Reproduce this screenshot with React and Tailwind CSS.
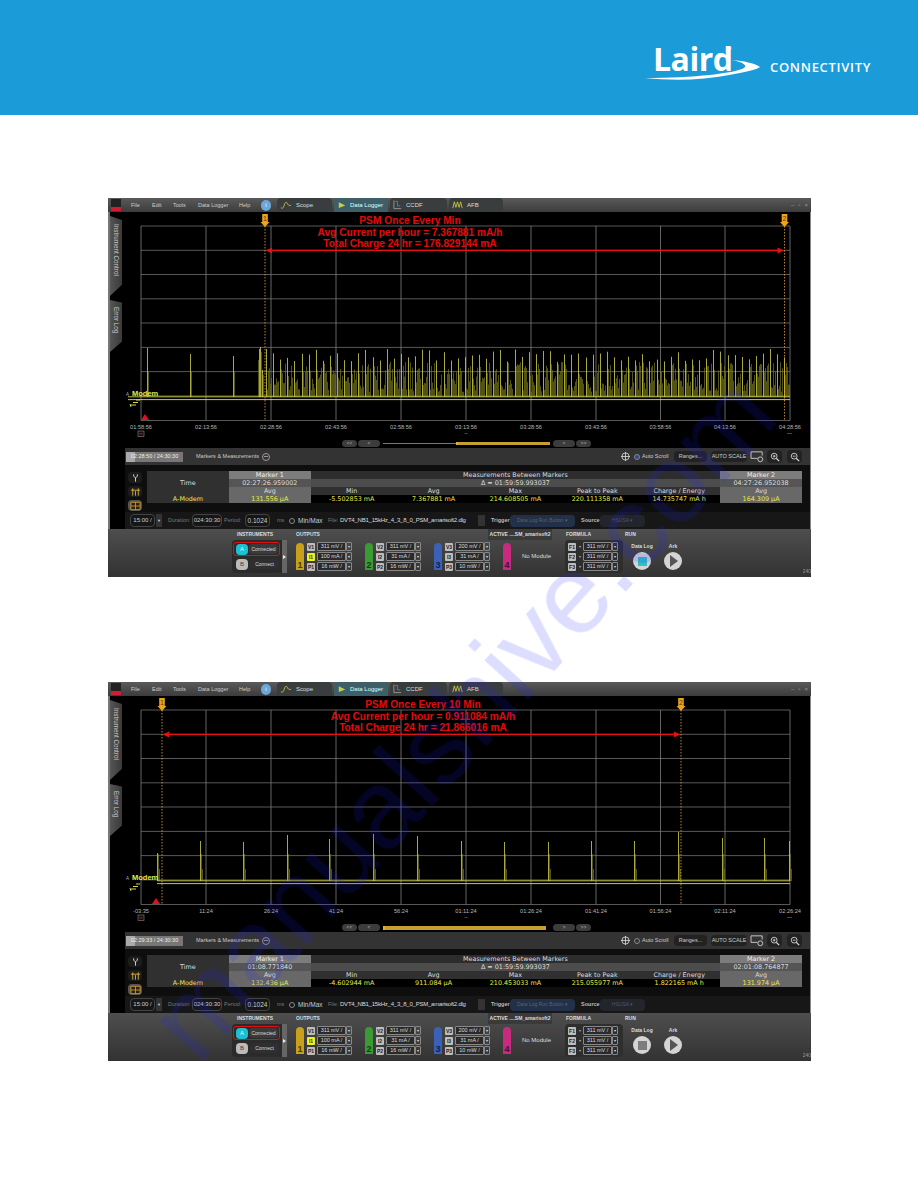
import React from 'react';

const GRID_X = [141, 206, 271, 336, 401, 466, 531, 596, 660.5, 725, 790];
const GRID_Y = [226, 250.3, 274.5, 298.8, 323, 347.4, 371.6, 395.9, 420.5];

const captures = [
  {
    title: 'PSM Once Every Min',
    avg: 'Avg Current per hour = 7.367881 mA/h',
    total: 'Total Charge 24 hr = 176.829144 mA',
    textX: 410,
    marker1: 265,
    marker2: 784.5,
    triangle: 145,
    dense: true,
    labels: ['01:58:56', '02:13:56', '02:28:56', '02:43:56', '02:58:56', '03:13:56', '03:28:56', '03:43:56', '03:58:56', '04:13:56', '04:28:56'],
    progress: '02:28:50 / 24:30:30',
    goldFrom: 73,
    goldH: 'h-[3px]',
    goldPad: '',
    autoScroll: 'bg-[#2b4a8a]',
    m1Time: '02:27:26.959002',
    m1Avg: '131.556 µA',
    delta: 'Δ = 01:59:59.993037',
    min: '-5.502853 mA',
    avgVal: '7.367881 mA',
    max: '214.608505 mA',
    p2p: '220.111358 mA',
    charge: '14.735747 mA h',
    m2Time: '04:27:26.952038',
    m2Avg: '164.309 µA',
    stop: 'bg-[#2fc0c8]',
  },
  {
    title: 'PSM Once Every 10 Min',
    avg: 'Avg Current per hour = 0.911084 mA/h',
    total: 'Total Charge 24 hr = 21.866016 mA',
    textX: 423,
    marker1: 162,
    marker2: 681,
    triangle: 156,
    dense: false,
    labels: ['-03:35', '11:24', '26:24', '41:24', '56:24', '01:11:24', '01:26:24', '01:41:24', '01:56:24', '02:11:24', '02:26:24'],
    progress: '02:29:33 / 24:30:30',
    goldFrom: 0,
    goldH: 'h-[4px]',
    goldPad: 'pr-[4px]',
    autoScroll: 'bg-transparent',
    m1Time: '01:08.771840',
    m1Avg: '132.436 µA',
    delta: 'Δ = 01:59:59.993037',
    min: '-4.602944 mA',
    avgVal: '911.084 µA',
    max: '210.453033 mA',
    p2p: '215.055977 mA',
    charge: '1.822165 mA h',
    m2Time: '02:01:08.764877',
    m2Avg: '131.974 µA',
    stop: 'bg-[#7d7d7d]',
  },
];

// sparse spikes of the 10 min capture, [x, top]
const SPARSE = [[157, 369], [200, 357], [243, 358], [287, 351], [329, 355], [373, 350], [417, 352], [461, 357], [504, 358], [548, 358], [591, 357], [634, 357], [678, 348], [722, 354], [764, 354], [789, 357]];

function denseSpikes() {
  let seed = 7;
  const rnd = () => {
    seed = (seed * 16807) % 2147483647;
    return seed / 2147483647;
  };
  const bright = [];
  const dim = [];
  [[147, 348], [190, 354], [233, 356]].forEach(([x, t]) => {
    bright.push(`M${x}.5 397V${t}`);
    dim.push(`M${x + 1}.5 397V372`);
  });
  bright.push('M259.5 397V349M260.5 397V347M262.5 397V370');
  dim.push('M258.5 397V360M261.500 397V352M263.5 397V375');
  for (let x = 266; x < 790; x += 7.1) {
    const top = 349 + rnd() * 13;
    const px = Math.round(x) + 0.5;
    bright.push(`M${px} 397V${top.toFixed(1)}`);
    // tail of each burst, uneven heights so it reads as stripes
    for (let i = 1; i <= 5; i++) {
      dim.push(`M${px + i} 397V${(362 + rnd() * 30).toFixed(1)}`);
    }
  }
  return { bright: bright.join(''), dim: dim.join('') };
}

function sparseSpikes() {
  const bright = SPARSE.map(([x, t]) => `M${x}.5 397V${t}`).join('');
  const dim = SPARSE.map(([x]) => `M${x + 1}.5 397V370M${x + 2}.5 397V385`).join('');
  return { bright, dim };
}

function MarkerFlag({ x, n }) {
  return (
    <g>
      <line x1={x} x2={x} y1="226" y2="420" stroke="#e8a23a" strokeWidth="0.8" strokeDasharray="1.5 1.5" />
      <path d={`M${x - 2.8} 214H${x + 2.8}V222H${x + 4.5}L${x} 227L${x - 4.5} 222H${x - 2.8}Z`} fill="#eda41c" />
      <text x={x} y="221" textAnchor="middle" fontSize="7" fill="#5a3a00" fontFamily="Liberation Sans, sans-serif">{n}</text>
    </g>
  );
}

function Chart({ data }) {
  const spikes = data.dense ? denseSpikes() : sparseSpikes();
  return (
    <svg viewBox="125 212 685 226" className="block w-[685px] h-[226px] bg-black">
      {GRID_Y.map((y) => (
        <line key={y} x1="141" x2="790" y1={y} y2={y} stroke="#6f6f6f" strokeWidth="0.8" />
      ))}
      {GRID_X.map((x) => (
        <line key={x} x1={x} x2={x} y1="226" y2="420.5" stroke="#7d7d7d" strokeWidth="0.8" />
      ))}
      <path d={spikes.dim} stroke="#77771c" strokeWidth="0.7" fill="none" />
      <path d={spikes.bright} stroke="#d4d44c" strokeWidth="0.8" fill="none" />
      <line x1={data.dense ? 128 : 157} x2="790" y1="396.8" y2="396.8" stroke="#cfcf45" strokeWidth="0.9" />
      <line x1={data.dense ? 128 : 157} x2="790" y1="399.6" y2="399.6" stroke="#dcdc50" strokeWidth="0.9" />

      <text x="126" y="396" fontSize="4.5" fill="#b0b0b0" fontFamily="Liberation Sans, sans-serif">A</text>
      <text x="132" y="396" fontSize="7.5" fontWeight="700" fill="#e4e84c" fontFamily="Liberation Sans, sans-serif">Modem</text>
      <path d="M136 400H140M133 402.5H138M131 405H136M130 404L131 407" stroke="#d6d640" strokeWidth="1" fill="none" />
      <path d={`M${data.triangle - 4} 420L${data.triangle} 414L${data.triangle + 4} 420Z`} fill="#e0101c" />

      <MarkerFlag x={data.marker1} n="1" />
      <MarkerFlag x={data.marker2} n="2" />

      <line x1={data.marker1 + 2} x2={data.marker2 - 2} y1="250.4" y2="250.4" stroke="#e81010" strokeWidth="1.3" />
      <path d={`M${data.marker1 + 1} 250.4l6 -3v6Z`} fill="#e81010" />
      <path d={`M${data.marker2 - 1} 250.4l-6 -3v6Z`} fill="#e81010" />
      <g fill="#e00c0c" fontSize="10.2" fontWeight="700" textAnchor="middle" fontFamily="Liberation Sans, sans-serif">
        <text x={data.textX} y="224">{data.title}</text>
        <text x={data.textX} y="235.5">{data.avg}</text>
        <text x={data.textX} y="247">{data.total}</text>
      </g>

      {data.labels.map((label, i) => (
        <text key={label} x={GRID_X[i]} y="428.5" textAnchor="middle" fontSize="5.6" fill="#b8b8b8" fontFamily="Liberation Sans, sans-serif">
          {label}
        </text>
      ))}
      <rect x="138" y="431" width="6" height="5.5" fill="#111" stroke="#888" strokeWidth="0.6" />
      <rect x="139.5" y="433.3" width="3" height="1" fill="#d01010" />
      <rect x="464.5" y="433" width="3" height="1" fill="#c01010" />
      <rect x="787" y="433" width="5" height="1" fill="#c01010" />
    </svg>
  );
}

function ScrollRow({ data }) {
  const btn = 'h-[7px] rounded-sm bg-[#3c3c3c] text-[#bbb] text-[5px] leading-[7px] text-center';
  return (
    <div className="h-[10px] bg-black flex items-start pl-[217px] pt-[2px] gap-[1px]">
      <div className={`${btn} w-[15px]`}>{'<<'}</div>
      <div className={`${btn} w-[22px]`}>{'<'}</div>
      <div className={`w-[167px] mx-[2px] h-[7px] flex items-center ${data.goldPad}`}>
        {data.goldFrom > 0 && <div className="h-px bg-[#777] w-[73px]" />}
        <div className={`${data.goldH} flex-1 bg-[#c4a02e] border-l-2 border-[#e0b030]`} />
      </div>
      <div className={`${btn} w-[22px]`}>{'>'}</div>
      <div className={`${btn} w-[15px]`}>{'>>'}</div>
    </div>
  );
}

function Crosshair() {
  return (
    <svg viewBox="0 0 10 10" className="w-[9px] h-[9px]" fill="none" stroke="#ddd" strokeWidth="0.9">
      <circle cx="5" cy="5" r="4" />
      <path d="M5 0V10M0 5H10" />
    </svg>
  );
}

function Magnifier({ sign }) {
  return (
    <div className="w-[15px] h-[13px] bg-[#222] rounded-sm flex items-center justify-center">
      <svg viewBox="0 0 12 12" className="w-[10px] h-[10px]" fill="none" stroke="#ddd" strokeWidth="1">
        <circle cx="5" cy="5" r="3.5" />
        <path d="M7.6 7.6L11 11" strokeWidth="1.5" />
        <path d={sign === '+' ? 'M3.4 5H6.6M5 3.4V6.6' : 'M3.4 5H6.6'} />
      </svg>
    </div>
  );
}

function MarkersRow({ data }) {
  return (
    <div className="h-[17px] bg-[#333] flex items-center pl-px text-[5.5px] text-[#ccc]">
      <div className="w-[57px] h-[10px] bg-[#777] relative flex items-center justify-center text-[#eee]">
        <div className="absolute left-0 top-0 bottom-0 w-[9px] bg-[#aaa]" />
        <span className="relative">{data.progress}</span>
      </div>
      <span className="ml-[13px]">Markers &amp; Measurements</span>
      <div className="ml-[3px] w-[8px] h-[8px] rounded-full border border-[#999] flex items-center justify-center">
        <div className="w-[4px] h-px bg-[#999]" />
      </div>
      <div className="ml-auto flex items-center">
        <Crosshair />
        <div className={`ml-[4px] w-[6px] h-[6px] rounded-full border border-[#888] ${data.autoScroll}`} />
        <span className="ml-[2px] w-[29px] whitespace-nowrap">Auto Scroll</span>
        <div className="ml-[3px] w-[33px] h-[11px] bg-[#222] rounded-sm flex items-center justify-center">Ranges...</div>
        <div className="ml-[4px] w-[36px] h-[11px] bg-[#222] rounded-sm flex items-center justify-center whitespace-nowrap">AUTO SCALE</div>
        <svg viewBox="0 0 16 14" className="ml-[3px] w-[15px] h-[13px]" fill="none" stroke="#ddd" strokeWidth="0.9">
          <path d="M8 9H1V2H13V6" />
          <circle cx="11" cy="10" r="2.6" />
        </svg>
        <div className="ml-[2px]"><Magnifier sign="+" /></div>
        <div className="ml-[5px] mr-[8px]"><Magnifier sign="-" /></div>
      </div>
    </div>
  );
}

function ToolButton({ kind }) {
  return (
    <div className={`w-[14px] h-[11px] rounded-sm flex items-center justify-center ${kind === 'grid' ? 'bg-[#555]' : 'bg-[#1c1c1c]'}`}>
      <svg viewBox="0 0 12 10" className="w-[11px] h-[10px]" fill="none" strokeWidth="1">
        {kind === 'probe' && <path d="M4 1V3L6 5L8 3V1M6 5V9" stroke="#ddd" />}
        {kind === 'span' && <path d="M1 3H11M3 1V9M9 1V9M6 4V9" stroke="#e0b040" />}
        {kind === 'grid' && <path d="M1 1H11V9H1ZM6 1V9M1 5H11" stroke="#c9962a" fill="#2a2208" />}
      </svg>
    </div>
  );
}

function Cell({ children, className = '' }) {
  return <div className={`h-[8px] leading-[8px] text-center whitespace-nowrap ${className}`}>{children}</div>;
}

function MeasureTable({ data }) {
  const yellow = 'text-[#e8e848]';
  const values = [data.min, data.avgVal, data.max, data.p2p, data.charge];
  const heads = ['Min', 'Avg', 'Max', 'Peak to Peak', 'Charge / Energy'];
  return (
    <div className="h-[47px] bg-[#0e0e0e] flex pt-[6px] pl-[3px] font-['DejaVu_Sans',sans-serif]">
      <div className="w-[19px] mt-[1px] flex flex-col gap-[3px]">
        <ToolButton kind="probe" />
        <ToolButton kind="span" />
        <ToolButton kind="grid" />
      </div>
      <div className="w-[655px] grid grid-cols-8 text-[6.4px] text-[#ddd] self-start">
        <Cell className="bg-[#303030]" />
        <Cell className="bg-[#7c7c7c] text-[#f0f0f0]">Marker 1</Cell>
        <Cell className="col-span-5 bg-[#2d2d2d]">Measurements Between Markers</Cell>
        <Cell className="bg-[#7c7c7c] text-[#f0f0f0]">Marker 2</Cell>

        <Cell className="bg-[#303030]">Time</Cell>
        <Cell className="bg-[#555]">{data.m1Time}</Cell>
        <Cell className="col-span-5 bg-[#4c4c4c]">{data.delta}</Cell>
        <Cell className="bg-[#555]">{data.m2Time}</Cell>

        <Cell className="bg-[#303030]" />
        <Cell className="bg-[#686868]">Avg</Cell>
        {heads.map((h) => (
          <Cell key={h} className="bg-[#303030]">{h}</Cell>
        ))}
        <Cell className="bg-[#686868]">Avg</Cell>

        <Cell className={`bg-[#303030] ${yellow}`}>A-Modem</Cell>
        <Cell className={`bg-[#686868] ${yellow}`}>{data.m1Avg}</Cell>
        {values.map((v) => (
          <Cell key={v} className={`bg-black ${yellow}`}>{v}</Cell>
        ))}
        <Cell className={`bg-[#686868] ${yellow}`}>{data.m2Avg}</Cell>
      </div>
    </div>
  );
}

function FileRow() {
  const field = 'h-[13px] border border-[#444] bg-[#161616] rounded-sm flex items-center justify-center text-[#ccc] whitespace-nowrap';
  return (
    <div className="h-[17px] bg-[#171717] flex items-center pl-[5px] text-[5.5px] text-[#777]">
      <div className={`${field} w-[25px] text-[6px]`}>15:00 /</div>
      <div className="ml-[1px] w-[6px] h-[13px] bg-[#333] flex items-center justify-center text-[4px] text-[#ccc]">▼</div>
      <span className="ml-[6px] w-[24px]">Duration:</span>
      <div className={`${field} w-[30px] text-[6px]`}>024:30:30</div>
      <span className="ml-[2px] w-[16px]">Period:</span>
      <div className={`${field} ml-[5px] w-[25px] text-[6.5px]`}>0.1024</div>
      <span className="ml-[7px] w-[6px]">ms</span>
      <div className="ml-[6px] w-[6px] h-[6px] border border-[#888] rounded-sm" />
      <span className="ml-[3px] w-[25px] text-[#ccc] text-[6.5px] whitespace-nowrap">Min/Max</span>
      <span className="ml-[5px] w-[10px]">File:</span>
      <span className="ml-[2px] w-[135px] text-[#ddd] text-[6px] tracking-[-0.22px] whitespace-nowrap">DVT4_NB1_15kHz_4_3_8_0_PSM_amarisoft2.dlg</span>
      <div className="ml-[3px] w-[7px] h-[11px] bg-[#333]" />
      <span className="ml-[6px] w-[17px] text-[#bbb] font-bold">Trigger</span>
      <div className="ml-[2px] w-[65px] h-[12px] bg-[#23304a] rounded-sm flex items-center justify-center text-[#566] text-[5px] whitespace-nowrap">Data Log Run Button ▾</div>
      <span className="ml-[6px] w-[17px] text-[#bbb] font-bold">Source</span>
      <div className="ml-[2px] w-[45px] h-[12px] bg-[#22252b] rounded-sm flex items-center justify-center text-[#556] text-[5px]">HSUSA ▾</div>
    </div>
  );
}

function Setting({ badge, value, badgeClass = 'bg-[#bdbdbd] text-[#222]', wide }) {
  return (
    <div className="flex items-center h-[9px]">
      <div className={`w-[8px] h-[8px] rounded-[1px] text-[5px] leading-[8px] text-center font-bold ${badgeClass}`}>{badge}</div>
      {wide ? (
        <div className="w-[7px] text-[4px] leading-[9px] text-center text-[#aaa]">▾</div>
      ) : (
        <div className="w-[2px]" />
      )}
      <div className="w-[29px] h-[9px] border border-[#888] rounded-[1px] text-[5.5px] leading-[7px] text-center text-[#ddd] bg-[#2a2a2a] whitespace-nowrap">{value}</div>
      <div className="w-[6px] h-[9px] border border-[#888] rounded-[1px] text-[4px] leading-[7px] text-center text-[#ddd]">▾</div>
    </div>
  );
}

function Channel({ n, bar, rows, numColor }) {
  return (
    <div className="flex gap-[3px] items-center">
      <div className={`w-[8px] h-[27px] rounded-t-sm flex items-end justify-center text-[9px] leading-[10px] font-bold ${bar} ${numColor}`}>{n}</div>
      <div className="flex flex-col gap-px">
        {rows.map(([badge, value, cls]) => (
          <Setting key={badge} badge={badge} value={value} badgeClass={cls} />
        ))}
      </div>
    </div>
  );
}

function RunButton({ label, play, stop }) {
  return (
    <div className="flex flex-col items-center w-[20px]">
      <div className="text-[5px] leading-[6px] font-bold text-[#ddd] mb-[3px] whitespace-nowrap">{label}</div>
      <div className="w-[18px] h-[18px] rounded-full bg-[#d4d4d4] flex items-center justify-center">
        {play ? (
          <div className="w-0 h-0 ml-[2px] border-y-[6px] border-y-transparent border-l-[8px] border-l-[#555]" />
        ) : (
          <div className={`w-[9px] h-[9px] ${stop}`} />
        )}
      </div>
    </div>
  );
}

function InstrumentPanel({ data }) {
  const heading = 'text-[5px] font-bold text-[#ddd] h-[11px] leading-[11px] whitespace-nowrap';
  return (
    <div className="h-[48px] bg-gradient-to-b from-[#4e4e4e] to-[#333] flex pl-[124px] relative">
      <div className="w-[58px]">
        <div className={`${heading} pl-[5px]`}>INSTRUMENTS</div>
        <div className="h-[33px] bg-[#2b2b2b] flex flex-col relative px-[1px] pt-[2px] gap-[1px] rounded-sm w-[55px]">
          <div className="w-[47px] h-[14px] border border-[#e01010] rounded-[3px] flex items-center gap-[1px] pl-[2px] pr-px">
            <div className="w-[12px] h-[11px] bg-[#1cc0d2] rounded-sm text-[#d8f8ff] text-[6px] leading-[11px] text-center">A</div>
            <div className="flex-1 h-[10px] bg-[#3a3a3a] rounded-sm text-[5px] leading-[10px] text-center text-[#ddd]">Connected</div>
          </div>
          <div className="w-[47px] h-[14px] flex items-center gap-[2px] pl-[3px] pr-px">
            <div className="w-[12px] h-[11px] bg-[#bbb] rounded-sm text-[#444] text-[6px] leading-[11px] text-center">B</div>
            <div className="flex-1 h-[10px] bg-[#2f2f2f] rounded-sm text-[5px] leading-[10px] text-center text-[#ddd]">Connect</div>
          </div>
          <div className="absolute right-0 top-0 bottom-0 w-[5px] bg-[#666] flex items-center justify-center">
            <div className="w-0 h-0 border-y-[2px] border-y-transparent border-l-[3px] border-l-[#eee]" />
          </div>
        </div>
      </div>
      <div className="ml-[6px] w-[189px]">
        <div className={heading}>OUTPUTS</div>
        <div className="flex pt-[2px] gap-[13px]">
          <Channel n="1" bar="bg-[#c9a01c]" numColor="text-[#4a3a00]" rows={[['V1', '311 mV /'], ['I1', '100 mA /', 'bg-[#f0f020] text-[#333]'], ['P1', '16 mW /']]} />
          <Channel n="2" bar="bg-[#3a9a34]" numColor="text-[#0f3f10]" rows={[['V2', '311 mV /'], ['I2', '31 mA /'], ['P2', '16 mW /']]} />
          <Channel n="3" bar="bg-[#3a60b8]" numColor="text-[#0f1f55]" rows={[['V3', '200 mV /'], ['I3', '31 mA /'], ['P3', '10 mW /']]} />
        </div>
      </div>
      <div className="w-[64px] ml-[3px]">
        <div className={`${heading} text-center text-[4.6px] bg-[#3a3a3a]`}>ACTIVE ....SM_amarisoft2</div>
        <div className="flex items-center pt-[3px] pl-[15px]">
          <div className="w-[8px] h-[27px] rounded-t-sm bg-[#c82a80] flex items-end justify-center text-[9px] leading-[10px] font-bold text-[#451030]">4</div>
          <span className="ml-[11px] text-[6px] text-[#ddd] whitespace-nowrap">No Module</span>
        </div>
      </div>
      <div className="ml-[13px] w-[58px]">
        <div className={`${heading} pl-px`}>FORMULA</div>
        <div className="bg-[#2e2e2e] flex flex-col gap-px pl-[3px] pt-[2px] pb-[2px] rounded-sm">
          <Setting badge="F1" value="311 mV /" wide />
          <Setting badge="F2" value="311 mV /" wide />
          <Setting badge="F3" value="311 mV /" wide />
        </div>
      </div>
      <div className="ml-[2px]">
        <div className={heading}>RUN</div>
        <div className="flex gap-[11px] pl-[7px] pt-[3px]">
          <RunButton label="Data Log" stop={data.stop} />
          <RunButton label="Ark" play />
        </div>
      </div>
      <div className="absolute right-0 bottom-[2px] text-[5px] text-[#999]">240</div>
    </div>
  );
}

function AppIcon() {
  return (
    <div className="w-[10px] h-[12px] ml-[3px] flex flex-col">
      <div className="h-[8px] bg-[#222]" />
      <div className="h-[4px] bg-[#d21c32]" />
    </div>
  );
}

function Tab({ children, label, active }) {
  return (
    <div className={`h-[14px] flex items-center gap-[4px] pl-[3px] text-[6px] rounded-t-sm ${active ? 'bg-[#3f5f68] text-[#dff]' : 'bg-[#3a3d3d] text-[#ddd]'} `}>
      {children}
      <span>{label}</span>
    </div>
  );
}

function TitleBar() {
  const menu = [['File', 'w-[21px]'], ['Edit', 'w-[21px]'], ['Tools', 'w-[25px]'], ['Data Logger', 'w-[41px]'], ['Help', 'w-[22px]']];
  return (
    <div className="h-[14px] bg-gradient-to-b from-[#5a5a5a] to-[#3c3c3c] flex items-center text-[5.5px] text-[#ccc]">
      <AppIcon />
      <div className="flex ml-[10px]">
        {menu.map(([m, w]) => (
          <span key={m} className={w}>{m}</span>
        ))}
      </div>
      <div className="w-[10px] h-[11px] rounded-full bg-[#6aa8dc] text-white text-[6px] leading-[11px] text-center">i</div>
      <div className="ml-[6px] w-[55px]">
        <Tab label="Scope">
          <svg viewBox="0 0 14 10" className="w-[12px] h-[10px]" fill="none" stroke="#d8d840" strokeWidth="0.9">
            <path d="M1 8C3 10 4 8 5 5C6 1 8 1 9 4C10 6 12 6 13 5" />
          </svg>
        </Tab>
      </div>
      <div className="ml-[2px] w-[54px]">
        <Tab label="Data Logger" active>
          <svg viewBox="0 0 10 10" className="ml-[1px] w-[8px] h-[9px]">
            <path d="M1 1L9 5L1 8Z" fill="#c8d040" />
          </svg>
        </Tab>
      </div>
      <div className="ml-[2px] w-[57px]">
        <Tab label="CCDF">
          <svg viewBox="0 0 10 10" className="w-[9px] h-[10px]" fill="none">
            <path d="M1 0V9H9" stroke="#999" />
            <path d="M2 1H5V6H8" stroke="#3a8ac0" />
          </svg>
        </Tab>
      </div>
      <div className="ml-[2px] w-[54px]">
        <Tab label="AFB">
          <svg viewBox="0 0 14 10" className="w-[11px] h-[10px]" fill="none" stroke="#d8d840" strokeWidth="1">
            <path d="M1 9L3 1L5 8L7 1L9 8L11 1L13 9" />
          </svg>
        </Tab>
      </div>
      <div className="ml-auto mr-[3px] flex gap-[4px] text-[6px] text-[#999]">
        <span>–</span>
        <span>▫</span>
        <span>×</span>
      </div>
    </div>
  );
}

function SideRail() {
  const tab = "w-[12px] bg-gradient-to-r from-[#555] to-[#3a3a3a] text-[#ccc] text-[6.3px] leading-[12px] [writing-mode:vertical-rl] whitespace-nowrap";
  return (
    <div className="w-[17px] bg-black border-l-2 border-[#777] pt-[4px]">
      <div className={`${tab} h-[80px] pt-[8px] [clip-path:polygon(0_0,100%_5%,100%_86%,0_100%)]`}>Instrument Control</div>
      <div className={`${tab} mt-[4px] h-[52px] pt-[7px] [clip-path:polygon(0_0,100%_5%,100%_80%,0_100%)]`}>Error Log</div>
    </div>
  );
}

function Capture({ data }) {
  return (
    <div className="w-[703px] mx-[108px] flex flex-col blur-[0.4px]">
      <TitleBar />
      <div className="flex border-r border-[#888] bg-black">
        <SideRail />
        <div className="flex-1 min-w-0">
          <Chart data={data} />
          <ScrollRow data={data} />
          <MarkersRow data={data} />
          <MeasureTable data={data} />
          <FileRow />
        </div>
      </div>
      <InstrumentPanel data={data} />
    </div>
  );
}

function Header() {
  return (
    <header className="h-[115px] bg-[#1b9bd8] flex justify-end pr-[47px]">
      <div className="relative w-[227px] h-[115px] text-white">
        <span className="absolute left-[9px] top-[39px] text-[32px] leading-[40px] font-bold font-['Open_Sans',sans-serif] tracking-[-0.5px]">Laird</span>
        <span className="absolute left-[83px] top-[47px] text-[3px]">TM</span>
        <svg viewBox="0 0 120 30" className="absolute left-0 top-[55px] w-[120px] h-[30px]" fill="white">
          <path d="M1 23C30 26 60 25 85 20C100 17 113 15 116 12C110 8 100 6 88 5C98 7 104 10 100 13C92 18 50 23 1 23Z" />
        </svg>
        <span className="absolute left-[126px] top-[59px] text-[13px] leading-[16px] font-semibold tracking-[0.7px] whitespace-nowrap font-['Open_Sans',sans-serif]">CONNECTIVITY</span>
      </div>
    </header>
  );
}

export default function App() {
  return (
    <div className="relative w-[918px] h-[1188px] bg-white overflow-hidden font-['Liberation_Sans',sans-serif]">
      <Header />
      <div className="pt-[83px] flex flex-col gap-[105px]">
        {captures.map((c) => (
          <Capture key={c.title} data={c} />
        ))}
      </div>
      {/* diagonal watermark over the page */}
      <div className="absolute left-[170px] top-[985px] origin-left rotate-[-48deg] text-[112px] leading-none whitespace-nowrap text-[#2020ff] opacity-[0.15] pointer-events-none select-none">
        manualshive.com
      </div>
    </div>
  );
}
